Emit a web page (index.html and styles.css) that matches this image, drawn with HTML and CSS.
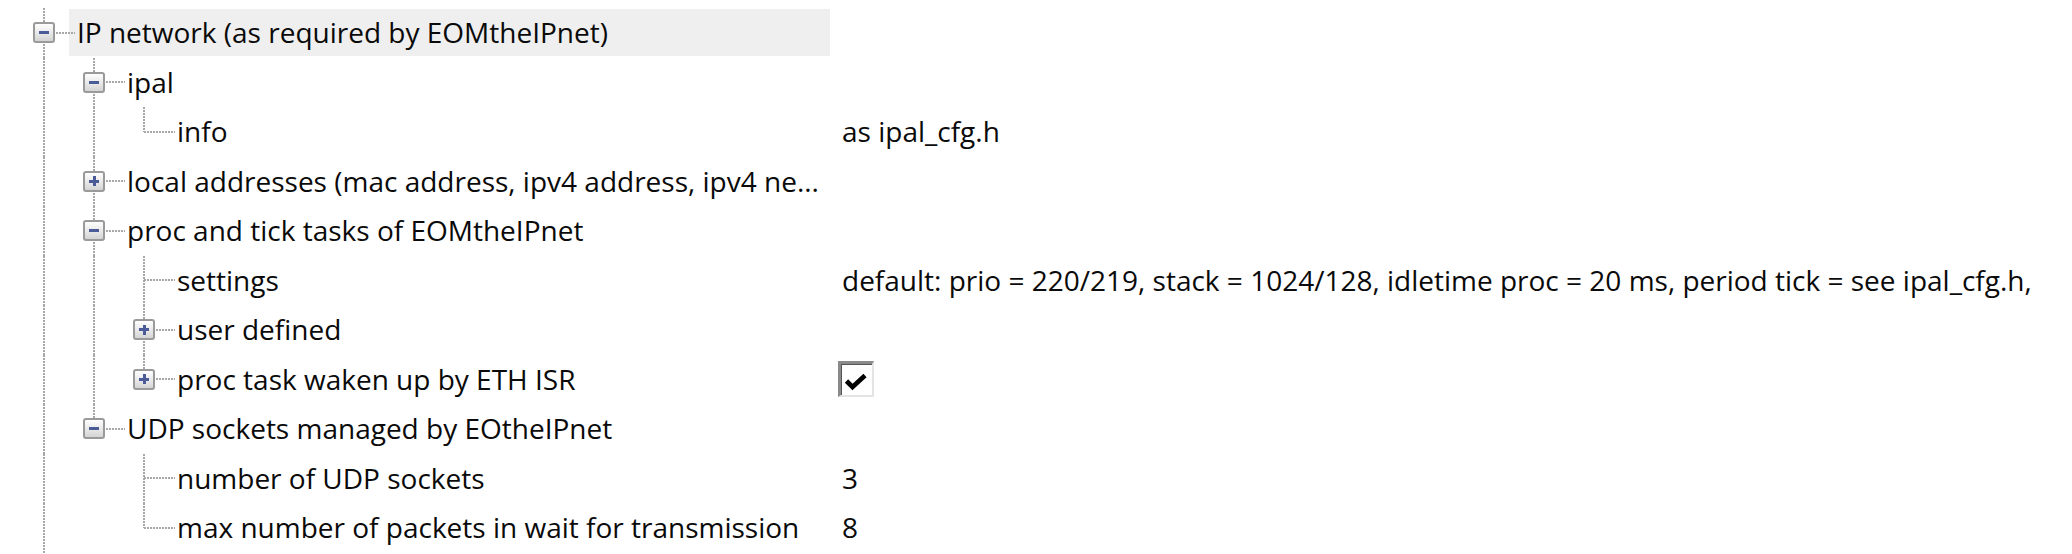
FILE: index.html
```html
<!DOCTYPE html>
<html>
<head>
<meta charset="utf-8">
<link rel="stylesheet" href="styles.css">
</head>
<body>
<div class="tree">
  <div class="row">
    <div class="branch">
      <div class="cell v h"><span class="box minus"></span></div>
      <div class="label selected">IP network (as required by EOMtheIPnet)</div>
    </div>
    <div class="value"></div>
  </div>
  <div class="row">
    <div class="branch">
      <div class="cell v"></div>
      <div class="cell v h"><span class="box minus"></span></div>
      <div class="label">ipal</div>
    </div>
    <div class="value"></div>
  </div>
  <div class="row">
    <div class="branch">
      <div class="cell v"></div>
      <div class="cell v"></div>
      <div class="cell half h"></div>
      <div class="label">info</div>
    </div>
    <div class="value">as ipal_cfg.h</div>
  </div>
  <div class="row">
    <div class="branch">
      <div class="cell v"></div>
      <div class="cell v h"><span class="box plus"></span></div>
      <div class="label">local addresses (mac address, ipv4 address, ipv4 ne...</div>
    </div>
    <div class="value"></div>
  </div>
  <div class="row">
    <div class="branch">
      <div class="cell v"></div>
      <div class="cell v h"><span class="box minus"></span></div>
      <div class="label">proc and tick tasks of EOMtheIPnet</div>
    </div>
    <div class="value"></div>
  </div>
  <div class="row">
    <div class="branch">
      <div class="cell v"></div>
      <div class="cell v"></div>
      <div class="cell v h"></div>
      <div class="label">settings</div>
    </div>
    <div class="value">default: prio = 220/219, stack = 1024/128, idletime proc = 20 ms, period tick = see ipal_cfg.h,</div>
  </div>
  <div class="row">
    <div class="branch">
      <div class="cell v"></div>
      <div class="cell v"></div>
      <div class="cell v h"><span class="box plus"></span></div>
      <div class="label">user defined</div>
    </div>
    <div class="value"></div>
  </div>
  <div class="row">
    <div class="branch">
      <div class="cell v"></div>
      <div class="cell v"></div>
      <div class="cell half h"><span class="box plus"></span></div>
      <div class="label">proc task waken up by ETH ISR</div>
    </div>
    <div class="value">
      <span class="check"><svg width="24" height="20" viewBox="0 0 24 20"><path d="M2.5 9 L8.5 15 L21 3.5" fill="none" stroke="#000" stroke-width="4.6"/></svg></span>
    </div>
  </div>
  <div class="row">
    <div class="branch">
      <div class="cell v"></div>
      <div class="cell half h"><span class="box minus"></span></div>
      <div class="label">UDP sockets managed by EOtheIPnet</div>
    </div>
    <div class="value"></div>
  </div>
  <div class="row">
    <div class="branch">
      <div class="cell v"></div>
      <div class="cell"></div>
      <div class="cell v h"></div>
      <div class="label">number of UDP sockets</div>
    </div>
    <div class="value">3</div>
  </div>
  <div class="row">
    <div class="branch">
      <div class="cell v"></div>
      <div class="cell"></div>
      <div class="cell half h"></div>
      <div class="label">max number of packets in wait for transmission</div>
    </div>
    <div class="value">8</div>
  </div>
</div>
</body>
</html>
```
FILE: styles.css
```css
html, body {
  margin: 0;
  padding: 0;
  background: #fff;
}
body {
  font-family: "Open Sans", "Noto Sans", sans-serif;
  font-size: 28px;
  color: #0a0a0a;
  width: 2072px;
  height: 554px;
  overflow: hidden;
}
.tree {
  padding: 8px 0 0 19px;
  display: flex;
  flex-direction: column;
}
.row {
  display: grid;
  grid-template-columns: 811px 1fr;
  height: 49.5px;
}
.branch {
  display: flex;
  align-items: stretch;
  min-width: 0;
}
.cell {
  flex: 0 0 50px;
  position: relative;
  display: flex;
  align-items: center;
  justify-content: center;
}
.cell.v::before,
.cell.half::before {
  content: "";
  position: absolute;
  left: 24px;
  top: 0;
  width: 2px;
  height: 100%;
  background-image: linear-gradient(to bottom, #a8a8a8 0 55%, transparent 55% 100%);
  background-size: 2px 3px;
}
.cell.half::before {
  height: 50%;
}
.cell.h::after {
  content: "";
  position: absolute;
  left: 25px;
  top: calc(50% - 1px);
  width: 31px;
  height: 2px;
  background-image: linear-gradient(to right, #a8a8a8 0 55%, transparent 55% 100%);
  background-size: 3px 2px;
}
.box {
  position: relative;
  z-index: 1;
  width: 18px;
  height: 17px;
  border: 2px solid #9a9a9a;
  border-radius: 3px;
  background: linear-gradient(#fefefe, #e6e6e6 60%, #d4d4d4);
  display: flex;
  align-items: center;
  justify-content: center;
}
.box::before {
  content: "";
  position: absolute;
  width: 10px;
  height: 3px;
  background: #4b5b98;
}
.box.plus::after {
  content: "";
  position: absolute;
  width: 3px;
  height: 10px;
  background: #4b5b98;
}
.label {
  flex: 1 1 auto;
  min-width: 0;
  align-self: center;
  height: 47px;
  line-height: 47px;
  padding-left: 8px;
  white-space: nowrap;
  overflow: hidden;
}
.label.selected {
  background: #efefef;
}
.value {
  padding-left: 12px;
  white-space: nowrap;
  line-height: 49.5px;
  display: flex;
  align-items: center;
}
.check {
  width: 31px;
  height: 31px;
  border-style: solid;
  border-width: 3px 2px 2px 3px;
  border-color: #8a8a8a #e4e4e4 #e4e4e4 #8a8a8a;
  box-shadow: inset 1px 1px 0 #555;
  background: #fff;
  display: flex;
  align-items: flex-end;
  justify-content: flex-start;
  margin-left: -4px;
}
.check svg {
  margin: 0 0 3px 3px;
}
```
